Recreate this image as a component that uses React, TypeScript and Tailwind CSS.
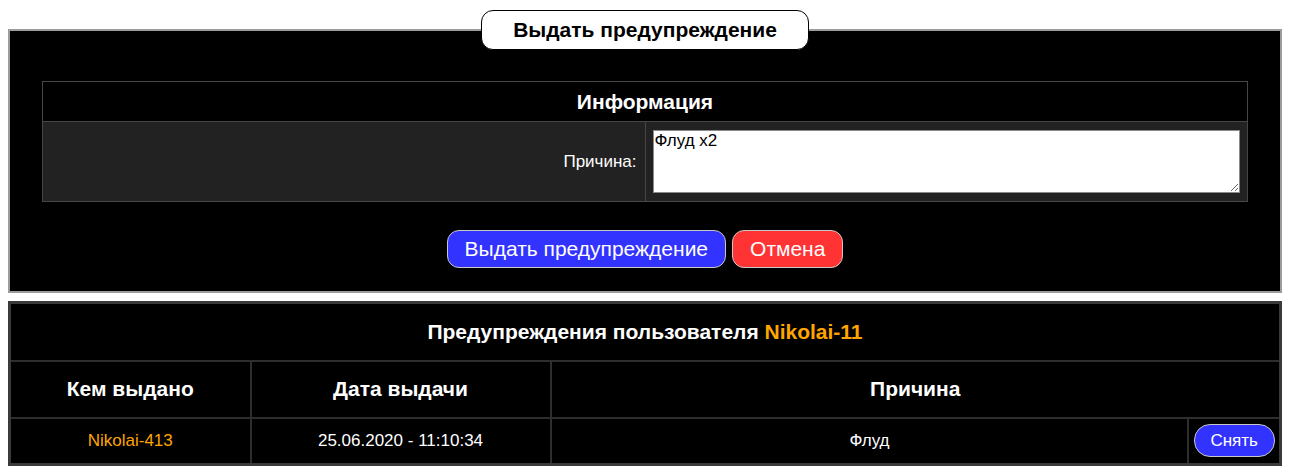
import React, { useState } from 'react';

interface Warning {
  id: number;
  issuedBy: string;
  date: string;
  reason: string;
}

const initialWarnings: Warning[] = [
  { id: 1, issuedBy: 'Nikolai-413', date: '25.06.2020 - 11:10:34', reason: 'Флуд' },
];

function App() {
  const [reason, setReason] = useState('Флуд х2');
  const [warnings, setWarnings] = useState<Warning[]>(initialWarnings);

  return (
    <div className="min-h-screen bg-white px-2 pt-[10px] font-['Liberation_Sans',Arial,sans-serif]">
      <fieldset className="border-2 border-[#9c9c9c] bg-black pb-[23px]">
        <legend className="mx-auto rounded-[12px] border border-black bg-white px-[31px] py-[7px] text-[21px] leading-[24px] font-bold text-black">
          Выдать предупреждение
        </legend>

        <table className="mx-auto mt-[31px] w-[95%] table-fixed border-collapse border border-[#464646] text-white">
          <tbody>
            <tr className="h-[40px]">
              <th colSpan={2} className="border border-[#464646] bg-black text-[21px] font-bold">
                Информация
              </th>
            </tr>
            <tr className="h-[80px] bg-[#222222]">
              <td className="w-1/2 border border-[#464646] pr-[8px] text-right text-[17px]">Причина:</td>
              <td className="border border-[#464646] px-[7px] py-[7px]">
                <textarea
                  value={reason}
                  onChange={(e) => setReason(e.target.value)}
                  className="block h-[63px] w-full border border-[#8a8a8a] bg-white px-[1px] py-0 text-[17px] leading-[20px] text-black outline-none"
                />
              </td>
            </tr>
          </tbody>
        </table>

        <div className="mt-[28px] flex justify-center gap-[6px]">
          <button className="h-[38px] rounded-[12px] border border-[#c8c8c8] bg-[#3333ff] px-[17px] text-[21px] text-white">
            Выдать предупреждение
          </button>
          <button className="h-[38px] rounded-[12px] border border-[#c8c8c8] bg-[#ff3333] px-[17px] text-[21px] text-white">
            Отмена
          </button>
        </div>
      </fieldset>

      <table className="mt-[8px] w-full table-fixed border-collapse border-[3px] border-[#3a3a3a] bg-black text-white">
        <colgroup>
          <col className="w-[241px]" />
          <col className="w-[300px]" />
          <col />
          <col className="w-[92px]" />
        </colgroup>
        <tbody>
          <tr className="h-[58px]">
            <th colSpan={4} className="border-2 border-[#2e2e2e] text-[21px] font-bold">
              Предупреждения пользователя <span className="text-[#ffa500]">Nikolai-11</span>
            </th>
          </tr>
          <tr className="h-[57px]">
            <th className="border-2 border-[#2e2e2e] text-[21px] font-bold">Кем выдано</th>
            <th className="border-2 border-[#2e2e2e] text-[21px] font-bold">Дата выдачи</th>
            <th colSpan={2} className="border-2 border-[#2e2e2e] text-[21px] font-bold">Причина</th>
          </tr>
          {warnings.map((w) => (
            <tr key={w.id} className="h-[47px] text-[17px]">
              <td className="border-2 border-[#2e2e2e] text-center text-[#ffa500]">{w.issuedBy}</td>
              <td className="border-2 border-[#2e2e2e] text-center">{w.date}</td>
              <td className="border-2 border-[#2e2e2e] text-center">{w.reason}</td>
              <td className="border-2 border-[#2e2e2e] text-center">
                <button
                  onClick={() => setWarnings((prev) => prev.filter((x) => x.id !== w.id))}
                  className="h-[33px] w-[81px] rounded-[16px] border border-[#c8c8c8] bg-[#3333ff] text-[17px] text-white"
                >
                  Снять
                </button>
              </td>
            </tr>
          ))}
        </tbody>
      </table>
    </div>
  );
}

export default App;
